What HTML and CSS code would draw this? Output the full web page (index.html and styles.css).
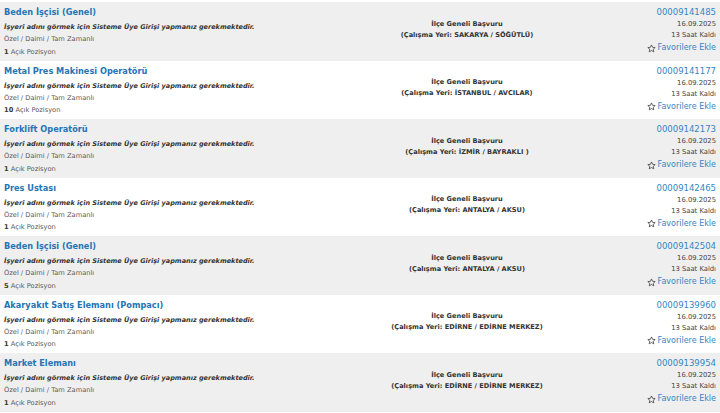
FILE: index.html
```html
<!DOCTYPE html>
<html lang="tr">
<head>
<meta charset="utf-8">
<link rel="stylesheet" href="styles.css">
</head>
<body>
<div class="list">
  <div class="job odd">
    <div class="left">
      <a class="title">Beden İşçisi (Genel)</a>
      <div class="firm">İşyeri adını görmek için Sisteme Üye Girişi yapmanız gerekmektedir.</div>
      <div class="type">Özel / Daimi / Tam Zamanlı</div>
      <div class="count"><b>1</b> Açık Pozisyon</div>
    </div>
    <div class="mid">
      <div>İlçe Geneli Başvuru</div>
      <div>(Çalışma Yeri: SAKARYA / SÖĞÜTLÜ)</div>
    </div>
    <div class="right">
      <div class="no">00009141485</div>
      <div class="date">16.09.2025</div>
      <div class="left-time">13 Saat Kaldı</div>
      <div class="fav"><svg class="star" viewBox="0 0 24 24"><path d="M12 2.5l2.9 6.3 6.9.7-5.2 4.6 1.5 6.8L12 17.4l-6.1 3.5 1.5-6.8-5.2-4.6 6.9-.7z"/></svg>Favorilere Ekle</div>
    </div>
  </div>
  <div class="job">
    <div class="left">
      <a class="title">Metal Pres Makinesi Operatörü</a>
      <div class="firm">İşyeri adını görmek için Sisteme Üye Girişi yapmanız gerekmektedir.</div>
      <div class="type">Özel / Daimi / Tam Zamanlı</div>
      <div class="count"><b>10</b> Açık Pozisyon</div>
    </div>
    <div class="mid">
      <div>İlçe Geneli Başvuru</div>
      <div>(Çalışma Yeri: İSTANBUL / AVCILAR)</div>
    </div>
    <div class="right">
      <div class="no">00009141177</div>
      <div class="date">16.09.2025</div>
      <div class="left-time">13 Saat Kaldı</div>
      <div class="fav"><svg class="star" viewBox="0 0 24 24"><path d="M12 2.5l2.9 6.3 6.9.7-5.2 4.6 1.5 6.8L12 17.4l-6.1 3.5 1.5-6.8-5.2-4.6 6.9-.7z"/></svg>Favorilere Ekle</div>
    </div>
  </div>
  <div class="job odd">
    <div class="left">
      <a class="title">Forklift Operatörü</a>
      <div class="firm">İşyeri adını görmek için Sisteme Üye Girişi yapmanız gerekmektedir.</div>
      <div class="type">Özel / Daimi / Tam Zamanlı</div>
      <div class="count"><b>1</b> Açık Pozisyon</div>
    </div>
    <div class="mid">
      <div>İlçe Geneli Başvuru</div>
      <div>(Çalışma Yeri: İZMİR / BAYRAKLI )</div>
    </div>
    <div class="right">
      <div class="no">00009142173</div>
      <div class="date">16.09.2025</div>
      <div class="left-time">13 Saat Kaldı</div>
      <div class="fav"><svg class="star" viewBox="0 0 24 24"><path d="M12 2.5l2.9 6.3 6.9.7-5.2 4.6 1.5 6.8L12 17.4l-6.1 3.5 1.5-6.8-5.2-4.6 6.9-.7z"/></svg>Favorilere Ekle</div>
    </div>
  </div>
  <div class="job">
    <div class="left">
      <a class="title">Pres Ustası</a>
      <div class="firm">İşyeri adını görmek için Sisteme Üye Girişi yapmanız gerekmektedir.</div>
      <div class="type">Özel / Daimi / Tam Zamanlı</div>
      <div class="count"><b>1</b> Açık Pozisyon</div>
    </div>
    <div class="mid">
      <div>İlçe Geneli Başvuru</div>
      <div>(Çalışma Yeri: ANTALYA / AKSU)</div>
    </div>
    <div class="right">
      <div class="no">00009142465</div>
      <div class="date">16.09.2025</div>
      <div class="left-time">13 Saat Kaldı</div>
      <div class="fav"><svg class="star" viewBox="0 0 24 24"><path d="M12 2.5l2.9 6.3 6.9.7-5.2 4.6 1.5 6.8L12 17.4l-6.1 3.5 1.5-6.8-5.2-4.6 6.9-.7z"/></svg>Favorilere Ekle</div>
    </div>
  </div>
  <div class="job odd">
    <div class="left">
      <a class="title">Beden İşçisi (Genel)</a>
      <div class="firm">İşyeri adını görmek için Sisteme Üye Girişi yapmanız gerekmektedir.</div>
      <div class="type">Özel / Daimi / Tam Zamanlı</div>
      <div class="count"><b>5</b> Açık Pozisyon</div>
    </div>
    <div class="mid">
      <div>İlçe Geneli Başvuru</div>
      <div>(Çalışma Yeri: ANTALYA / AKSU)</div>
    </div>
    <div class="right">
      <div class="no">00009142504</div>
      <div class="date">16.09.2025</div>
      <div class="left-time">13 Saat Kaldı</div>
      <div class="fav"><svg class="star" viewBox="0 0 24 24"><path d="M12 2.5l2.9 6.3 6.9.7-5.2 4.6 1.5 6.8L12 17.4l-6.1 3.5 1.5-6.8-5.2-4.6 6.9-.7z"/></svg>Favorilere Ekle</div>
    </div>
  </div>
  <div class="job">
    <div class="left">
      <a class="title">Akaryakıt Satış Elemanı (Pompacı)</a>
      <div class="firm">İşyeri adını görmek için Sisteme Üye Girişi yapmanız gerekmektedir.</div>
      <div class="type">Özel / Daimi / Tam Zamanlı</div>
      <div class="count"><b>1</b> Açık Pozisyon</div>
    </div>
    <div class="mid">
      <div>İlçe Geneli Başvuru</div>
      <div>(Çalışma Yeri: EDİRNE / EDİRNE MERKEZ)</div>
    </div>
    <div class="right">
      <div class="no">00009139960</div>
      <div class="date">16.09.2025</div>
      <div class="left-time">13 Saat Kaldı</div>
      <div class="fav"><svg class="star" viewBox="0 0 24 24"><path d="M12 2.5l2.9 6.3 6.9.7-5.2 4.6 1.5 6.8L12 17.4l-6.1 3.5 1.5-6.8-5.2-4.6 6.9-.7z"/></svg>Favorilere Ekle</div>
    </div>
  </div>
  <div class="job odd">
    <div class="left">
      <a class="title">Market Elemanı</a>
      <div class="firm">İşyeri adını görmek için Sisteme Üye Girişi yapmanız gerekmektedir.</div>
      <div class="type">Özel / Daimi / Tam Zamanlı</div>
      <div class="count"><b>1</b> Açık Pozisyon</div>
    </div>
    <div class="mid">
      <div>İlçe Geneli Başvuru</div>
      <div>(Çalışma Yeri: EDİRNE / EDİRNE MERKEZ)</div>
    </div>
    <div class="right">
      <div class="no">00009139954</div>
      <div class="date">16.09.2025</div>
      <div class="left-time">13 Saat Kaldı</div>
      <div class="fav"><svg class="star" viewBox="0 0 24 24"><path d="M12 2.5l2.9 6.3 6.9.7-5.2 4.6 1.5 6.8L12 17.4l-6.1 3.5 1.5-6.8-5.2-4.6 6.9-.7z"/></svg>Favorilere Ekle</div>
    </div>
  </div>
</div>
</body>
</html>
```
FILE: styles.css
```css
html, body {
  margin: 0;
  padding: 0;
  background: #ffffff;
}
body {
  font-family: "DejaVu Sans", Verdana, sans-serif;
  color: #333333;
  overflow: hidden;
}
.list {
  padding-top: 2px;
}
.job {
  display: flex;
  align-items: flex-start;
  height: 58.5px;
  box-sizing: border-box;
  padding: 0 4px;
  background: #ffffff;
}
.job.odd {
  background: #efefef;
}
.left {
  flex: 0 0 290px;
  padding-top: 4px;
}
.title {
  display: block;
  font-size: 8.2px;
  line-height: 13px;
  font-weight: bold;
  color: #2574b6;
  white-space: nowrap;
}
.firm {
  margin-top: 2px;
  font-size: 6.5px;
  line-height: 12px;
  font-weight: bold;
  font-style: italic;
  color: #333333;
  white-space: nowrap;
}
.type {
  font-size: 6.7px;
  line-height: 12.5px;
  color: #5a5a5a;
  white-space: nowrap;
}
.count {
  font-size: 6.7px;
  line-height: 13px;
  color: #5a5a5a;
  white-space: nowrap;
}
.count b {
  color: #333333;
}
.mid {
  flex: 1 1 auto;
  padding-top: 16.5px;
  text-align: center;
  font-size: 6.6px;
  line-height: 11px;
  font-weight: bold;
  color: #333333;
  white-space: nowrap;
}
.right {
  flex: 0 0 76px;
  padding-top: 4px;
  text-align: right;
  white-space: nowrap;
}
.no {
  font-size: 8.5px;
  line-height: 13px;
  color: #3585c5;
}
.date, .left-time {
  font-size: 6.8px;
  line-height: 11px;
  color: #444444;
}
.fav {
  font-size: 8px;
  line-height: 14px;
  color: #3585c5;
  display: flex;
  justify-content: flex-end;
  align-items: center;
  gap: 2px;
}
.star {
  width: 9px;
  height: 9px;
  fill: none;
  stroke: #444444;
  stroke-width: 2.2;
  stroke-linejoin: round;
}
```
